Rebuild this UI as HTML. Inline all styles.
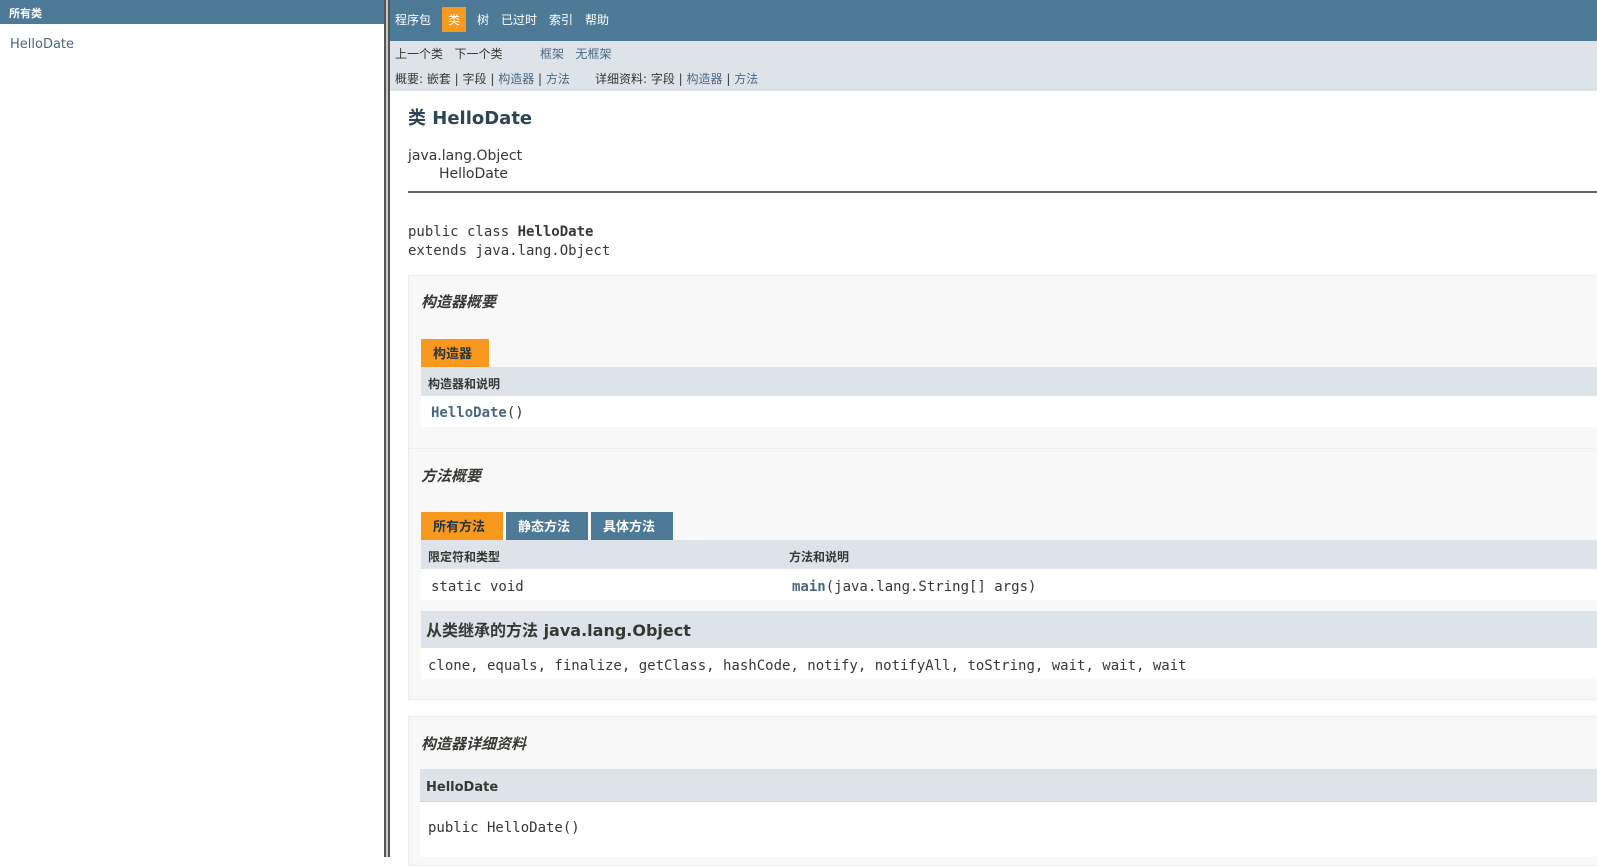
<!DOCTYPE html>
<html><head><meta charset="utf-8">
<style>
*{margin:0;padding:0;box-sizing:border-box}
body{width:1597px;height:857px;overflow:hidden;background:#fff;font-family:"DejaVu Sans","Liberation Sans","Noto Sans CJK SC",sans-serif;color:#353833;position:relative}
.a{position:absolute;white-space:nowrap}
.mono{font-family:"DejaVu Sans Mono","Liberation Mono","Noto Sans CJK SC",monospace}
.lnk{color:#4A6782}
</style></head><body>
<div class="a" style="left:0;top:0;width:384px;height:24px;background:#4D7A97"></div>
<div class="a" style="left:9px;top:5px;color:#fff;font-size:11px;font-weight:bold">所有类</div>
<div class="a lnk" style="left:10px;top:37px;font-size:13px">HelloDate</div>
<div class="a" style="left:384px;top:0;width:6px;height:857px;background:#c8c8c8;border-left:2px solid #555;border-right:2px solid #555"></div>
<div class="a" style="left:390px;top:0;width:1207px;height:41px;background:#4D7A97"></div>
<div class="a" style="left:442px;top:7px;width:24px;height:25px;background:#F8981D"></div>
<div class="a" style="top:11px;left:395px;color:#fff;font-size:12px">程序包</div>
<div class="a" style="top:11px;left:448px;color:#fff;font-size:12px">类</div>
<div class="a" style="top:11px;left:477px;color:#fff;font-size:12px">树</div>
<div class="a" style="top:11px;left:501px;color:#fff;font-size:12px">已过时</div>
<div class="a" style="top:11px;left:549px;color:#fff;font-size:12px">索引</div>
<div class="a" style="top:11px;left:585px;color:#fff;font-size:12px">帮助</div>
<div class="a" style="left:390px;top:41px;width:1207px;height:50px;background:#dee3e9"></div>
<div class="a" style="top:45px;left:395px;font-size:12px">上一个类&nbsp;&nbsp; 下一个类</div>
<div class="a lnk" style="top:45px;left:540px;font-size:12px">框架&nbsp;&nbsp; 无框架</div>
<div class="a" style="top:70px;left:395px;font-size:12px">概要: 嵌套 | 字段 | <span class="lnk">构造器</span> | <span class="lnk">方法</span></div>
<div class="a" style="top:70px;left:595px;font-size:12px">详细资料: 字段 | <span class="lnk">构造器</span> | <span class="lnk">方法</span></div>
<div class="a" style="left:408px;top:104px;font-size:18px;font-weight:bold;color:#2c4557">类 HelloDate</div>
<div class="a" style="left:408px;top:148px;font-size:14px">java.lang.Object</div>
<div class="a" style="left:439px;top:166px;font-size:14px">HelloDate</div>
<div class="a" style="left:408px;top:191px;width:1189px;height:2px;background:#666"></div>
<div class="a mono" style="left:408px;top:224px;font-size:14px">public class <b>HelloDate</b></div>
<div class="a mono" style="left:408px;top:243px;font-size:14px">extends java.lang.Object</div>
<div class="a" style="left:408px;top:275px;width:1189px;height:425px;background:#f8f8f8;border:1px solid #ededed;border-right:none"></div>
<div class="a" style="left:421px;top:291px;font-size:15px;font-weight:bold;font-style:italic">构造器概要</div>
<div class="a" style="left:421px;top:339px;width:68px;height:28px;background:#F8981D"></div>
<div class="a" style="left:433px;top:343px;font-size:13px;font-weight:bold;color:#253441">构造器</div>
<div class="a" style="left:421px;top:367px;width:1176px;height:29px;background:#dee3e9"></div>
<div class="a" style="left:428px;top:375px;font-size:12px;font-weight:bold">构造器和说明</div>
<div class="a" style="left:421px;top:396px;width:1176px;height:31px;background:#fff"></div>
<div class="a mono" style="left:431px;top:405px;font-size:14px"><b class="lnk">HelloDate</b>()</div>
<div class="a" style="left:408px;top:448px;width:1189px;height:252px;background:#f8f8f8;border:1px solid #ededed;border-right:none"></div>
<div class="a" style="left:421px;top:465px;font-size:15px;font-weight:bold;font-style:italic">方法概要</div>
<div class="a" style="left:421px;top:512px;width:82px;height:28px;background:#F8981D"></div>
<div class="a" style="left:506px;top:512px;width:82px;height:28px;background:#4D7A97"></div>
<div class="a" style="left:591px;top:512px;width:82px;height:28px;background:#4D7A97"></div>
<div class="a" style="left:433px;top:516px;font-size:13px;font-weight:bold;color:#253441">所有方法</div>
<div class="a" style="left:518px;top:516px;font-size:13px;font-weight:bold;color:#fff">静态方法</div>
<div class="a" style="left:603px;top:516px;font-size:13px;font-weight:bold;color:#fff">具体方法</div>
<div class="a" style="left:421px;top:540px;width:1176px;height:29px;background:#dee3e9"></div>
<div class="a" style="left:428px;top:548px;font-size:12px;font-weight:bold">限定符和类型</div>
<div class="a" style="left:789px;top:548px;font-size:12px;font-weight:bold">方法和说明</div>
<div class="a" style="left:421px;top:569px;width:1176px;height:31px;background:#fff"></div>
<div class="a mono" style="left:431px;top:579px;font-size:14px">static void</div>
<div class="a mono" style="left:792px;top:579px;font-size:14px"><b class="lnk">main</b>(java.lang.String[] args)</div>
<div class="a" style="left:421px;top:611px;width:1176px;height:37px;background:#dee3e9"></div>
<div class="a" style="left:426px;top:617px;font-size:16px;font-weight:bold">从类继承的方法 java.lang.Object</div>
<div class="a" style="left:421px;top:648px;width:1176px;height:31px;background:#fff"></div>
<div class="a mono" style="left:428px;top:658px;font-size:14px">clone, equals, finalize, getClass, hashCode, notify, notifyAll, toString, wait, wait, wait</div>
<div class="a" style="left:408px;top:716px;width:1189px;height:150px;background:#f8f8f8;border:1px solid #ededed;border-right:none"></div>
<div class="a" style="left:421px;top:733px;font-size:15px;font-weight:bold;font-style:italic">构造器详细资料</div>
<div class="a" style="left:420px;top:769px;width:1177px;height:33px;background:#dee3e9;border-bottom:1px solid #d0d6dc"></div>
<div class="a" style="left:426px;top:780px;font-size:13px;font-weight:bold">HelloDate</div>
<div class="a" style="left:420px;top:802px;width:1177px;height:55px;background:#fff"></div>
<div class="a mono" style="left:428px;top:820px;font-size:14px">public HelloDate()</div>
</body></html>
